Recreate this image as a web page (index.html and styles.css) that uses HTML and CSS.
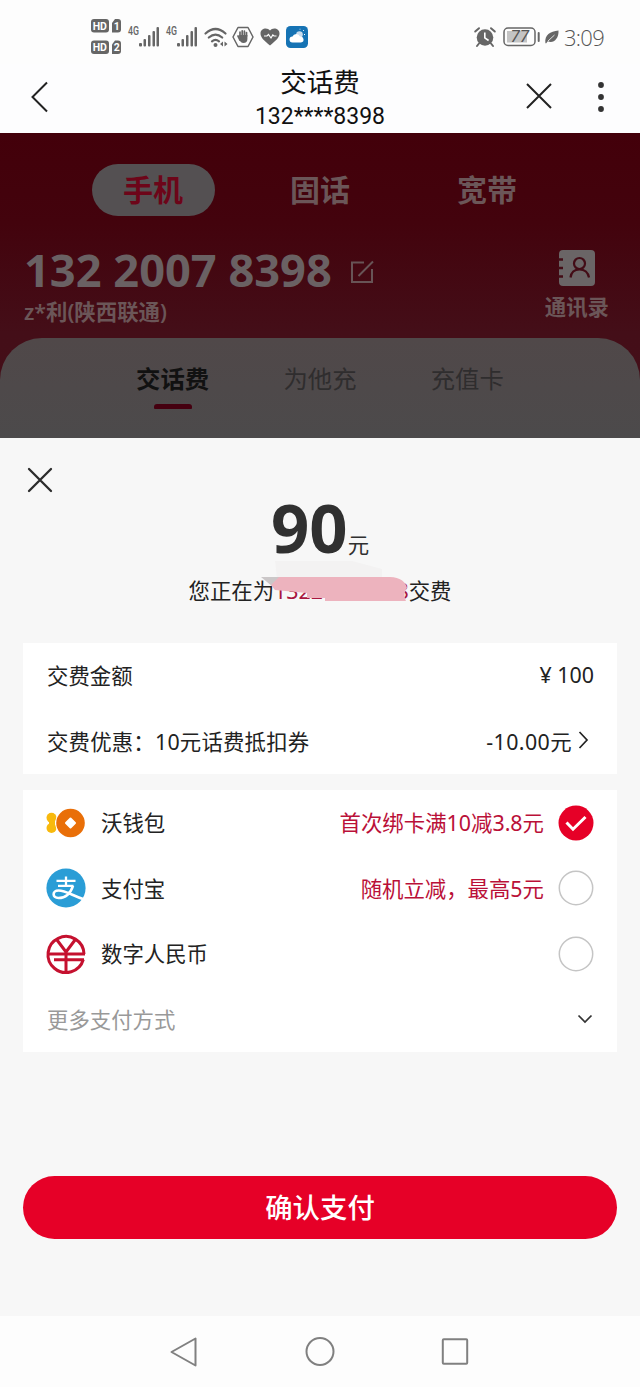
FILE: index.html
```html
<!DOCTYPE html>
<html lang="zh-CN">
<head>
<meta charset="utf-8">
<title>交话费</title>
<link rel="stylesheet" href="styles.css">
</head>
<body>
<div class="phone">
  <header class="status">
    <div class="status-left">
      <svg class="hd" width="31" height="36" viewBox="0 0 31 36">
        <g fill="#666"><rect x="0" y="0" width="18" height="13.500" rx="3"/><path d="M24 0h3a3 3 0 0 1 3 3v7.500a3 3 0 0 1-3 3h-6V4z"/><rect x="0" y="21.500" width="18" height="13.500" rx="3"/><path d="M24 21.500h3a3 3 0 0 1 3 3V32a3 3 0 0 1-3 3h-6v-9.500z"/></g>
        <g fill="#fff" class="badge-text"><text x="1.700" y="10.800">HD</text><text x="22.800" y="10.800">1</text><text x="1.700" y="32.300">HD</text><text x="22.800" y="32.300">2</text></g>
      </svg>
      <svg class="signal" width="32" height="22" viewBox="0 0 32 22"><text x="0" y="9" class="net-text" textLength="11" lengthAdjust="spacingAndGlyphs">4G</text><g fill="#666"><rect x="11" y="17" width="3" height="3.500" rx="1"/><rect x="15.500" y="13" width="2.500" height="7.500" rx="1"/><rect x="20" y="9" width="2.500" height="11.500" rx="1"/><rect x="24.500" y="5" width="2.500" height="15.500" rx="1"/><rect x="28.500" y="1" width="2.500" height="19.500" rx="1"/></g></svg>
      <svg class="signal second" width="32" height="22" viewBox="0 0 32 22"><text x="0" y="9" class="net-text" textLength="11" lengthAdjust="spacingAndGlyphs">4G</text><g fill="#666"><rect x="11" y="17" width="3" height="3.500" rx="1"/><rect x="15.500" y="13" width="2.500" height="7.500" rx="1"/><rect x="20" y="9" width="2.500" height="11.500" rx="1"/><rect x="24.500" y="5" width="2.500" height="15.500" rx="1"/><rect x="28.500" y="1" width="2.500" height="19.500" rx="1"/></g></svg>
      <svg class="wifi" width="24" height="21" viewBox="0 0 24 21"><g fill="none" stroke="#666" stroke-width="2.200" stroke-linecap="round"><path d="M1.500 6.500Q11.500-2.500 21.500 6.500M4.800 10.500Q11.500 4.800 18.200 10.500M8 14.300Q11.500 11.500 15 14.300"/></g><circle cx="11.500" cy="18" r="2" fill="#666"/><path d="M19 14.500v5l-3-2.500zM20.500 14.500v5l3-2.500z" fill="#666"/></svg>
      <svg class="hand" width="22" height="22" viewBox="0 0 22 22"><path d="M6 1.500h10l5 9.500-5 9.500H6L1 11z" fill="none" stroke="#666" stroke-width="1.500" stroke-linejoin="round"/><path d="M8 10V6M10.200 10V4.800M12.400 10V5M14.500 10V6.500M6 10l2 4" stroke="#666" stroke-width="1.700" stroke-linecap="round"/><path d="M7.200 9h8.200v4q0 4-4 4-3 0-4.200-4z" fill="#666"/></svg>
      <svg class="heart" width="20" height="18" viewBox="0 0 20 18"><path d="M10 17.500C4 12.500.5 9.500.5 5.500.5 0 7.500-1 10 2.500 12.500-1 19.500 0 19.500 5.500c0 4-3.500 7-9.500 12z" fill="#666"/><path d="M4 8h3L8.500 6.500l2.500 3.500 1.800-3L14 8h2.500" fill="none" stroke="#fff" stroke-width="1.200"/></svg>
      <svg class="weather" width="22" height="22" viewBox="0 0 22 22"><rect width="22" height="22" rx="4.500" fill="#1673b4"/><circle cx="13.500" cy="8.500" r="3.300" fill="#c9dced"/><path d="M14 3.500V2.800M18 8.500h1M17 5l.8-.8" stroke="#fff"/><path d="M6.500 16.500a3 3 0 0 1 0-6 4 4 0 0 1 7.500 0 3 3 0 1 1 1 6z" fill="#fff"/></svg>
    </div>
    <div class="status-right">
      <svg width="22" height="20" viewBox="0 0 22 20"><circle cx="11" cy="10.500" r="8.300" fill="#666"/><path d="M1.200 4.500 5 1.200M20.800 4.500 17 1.200M5 16.500l-2 2.500M17 16.500l2 2.500" stroke="#666" stroke-width="2" stroke-linecap="round"/><path d="M10.800 5.500v5.300l3.800 2.700" fill="none" stroke="#fff" stroke-width="1.600"/></svg>
      <svg class="battery" width="38" height="20" viewBox="0 0 38 20"><rect x="1" y="1" width="31" height="17.500" rx="4" fill="none" stroke="#666" stroke-width="1.500"/><rect x="4" y="4" width="20" height="11.500" fill="#c4c4c4"/><text x="7.500" y="15" class="battery-text">77</text><rect x="34.700" y="5" width="2" height="10" rx="1" fill="#666"/></svg>
      <svg class="leaf" width="14" height="14" viewBox="0 0 14 14"><path d="M13.500.5C14 9 8 14 2.800 11.300L1 13.500l-.6-.6C-.5 5 5 1.500 13.500.5z" fill="#666"/><path d="M3 11 9.500 5" stroke="#fff" stroke-width=".8"/></svg>
      <span class="clock">3:09</span>
    </div>
  </header>

  <div class="titlebar">
    <svg class="back" width="20" height="34" viewBox="0 0 20 34"><path d="M17 2.500 2.500 17 17 31.500" fill="none" stroke="#222" stroke-width="2"/></svg>
    <div class="title"><h1>交话费</h1><p>132****8398</p></div>
    <div class="title-actions">
      <svg width="28" height="28" viewBox="0 0 28 28"><path d="m2 2 24 24M26 2 2 26" stroke="#222" stroke-width="2"/></svg>
      <svg width="8" height="32" viewBox="0 0 8 32" fill="#333"><circle cx="4" cy="4" r="2.900"/><circle cx="4" cy="16" r="2.900"/><circle cx="4" cy="28" r="2.900"/></svg>
    </div>
  </div>

  <section class="hero">
    <nav class="services"><span class="active">手机</span><span>固话</span><span>宽带</span></nav>
    <div class="account">
      <div class="owner">
        <div class="number">132 2007 8398
          <svg class="edit" width="24" height="24" viewBox="0 0 24 24"><path d="M14 2.500H2v19.500h20V9M8.500 16 23 1.500" fill="none" stroke="#685456" stroke-width="2"/></svg>
        </div>
        <div class="region">z*利(陕西联通)</div>
      </div>
      <div class="contacts">
        <svg width="38" height="38" viewBox="0 0 38 38"><rect x="1" y="1" width="36" height="36" rx="4" fill="#6a6566"/><path d="M0 10.500h5M0 19h5M0 27.500h5" stroke="#430c16" stroke-width="2.500"/><g fill="none" stroke="#430c16" stroke-width="2.200"><circle cx="21.500" cy="14.500" r="5.500"/><path d="M12.500 28.500q1-8 9-8t9.500 8"/></g></svg>
        <span>通讯录</span>
      </div>
    </div>
    <nav class="recharge"><span class="current">交话费</span><span>为他充</span><span>充值卡</span></nav>
  </section>

  <main class="sheet">
    <svg class="close" width="26" height="26" viewBox="0 0 26 26"><path d="m2 2 22 22M24 2 2 24" stroke="#2b2b2b" stroke-width="2.300" stroke-linecap="round"/></svg>
    <div class="amount"><b>90</b><span>元</span></div>
    <p class="paying">您正在为<span class="masked">13220078398<svg class="smear" width="152" height="42" viewBox="0 0 152 42"><path d="M14 0h77l30 8v9H16z" fill="#f3f2f2"/><path d="M0 16h24v10L12 26z" fill="#cbc7c8"/><path d="M18 16h111c10 0 16 5 17 11-3 3-3 9-1 13H64V37H46V32L14 29l-4-5z" fill="#edb3be"/></svg></span>交费</p>

    <div class="card bill">
      <div class="row"><span>交费金额</span><span>¥ 100</span></div>
      <div class="row"><span class="coupon">交费优惠：10元话费抵扣券</span><span class="discount">-10.00元<svg width="14" height="20" viewBox="0 0 14 20"><path d="m2.500 2 7.500 8-7.500 8" fill="none" stroke="#222" stroke-width="1.700"/></svg></span></div>
    </div>

    <div class="card methods">
      <div class="row">
        <svg class="logo" width="40" height="40" viewBox="0 0 40 40"><g fill="#f8b90d"><circle cx="5.500" cy="14.700" r="5"/><circle cx="5.500" cy="25" r="5"/><rect x="3" y="14" width="6" height="11"/></g><circle cx="24.500" cy="20" r="15.200" fill="#fff"/><circle cx="24.500" cy="20" r="14.300" fill="#e96f08"/><path d="m24.500 15.500 4.500 4.500-4.500 4.500L20 20z" fill="#fff" stroke="#fff" stroke-width="2" stroke-linejoin="round"/></svg>
        <span class="name">沃钱包</span><span class="promo">首次绑卡满10减3.8元</span>
        <svg class="radio" width="36" height="36" viewBox="0 0 36 36"><circle cx="18" cy="18" r="17.500" fill="#e60027"/><path d="m8.500 17.500 6.500 6.700L27.500 12" fill="none" stroke="#fff" stroke-width="3"/></svg>
      </div>
      <div class="row">
        <svg class="logo" width="40" height="40" viewBox="0 0 40 40"><circle cx="20" cy="20" r="19.600" fill="#2a9dd6"/><g fill="none" stroke="#fff" stroke-width="2.300"><path d="M10.500 12.800h19M20 8.500v9.300M12 17.800h15.500"/><path d="M27 17.800C24 27 18 30 12.500 30 6 30 6 22.500 12.500 22.500c7 0 14 5 24.500 8.500" stroke-width="2.600"/></g></svg>
        <span class="name">支付宝</span><span class="promo">随机立减，最高5元</span>
        <svg class="radio" width="36" height="36" viewBox="0 0 36 36"><circle cx="18" cy="18" r="16.700" fill="#fff" stroke="#c5c5c5" stroke-width="1.500"/></svg>
      </div>
      <div class="row">
        <svg class="logo" width="40" height="40" viewBox="0 0 40 40"><g fill="none" stroke="#c5112f" stroke-width="3"><path d="M38 20A18 18 0 1 0 37.300 25.500"/><path d="M11 6 20 18 29 6M3 20h36M8 25.700h30M20 18v19"/></g></svg>
        <span class="name">数字人民币</span>
        <svg class="radio" width="36" height="36" viewBox="0 0 36 36"><circle cx="18" cy="18" r="16.700" fill="#fff" stroke="#c5c5c5" stroke-width="1.500"/></svg>
      </div>
      <div class="row more"><span>更多支付方式</span><svg width="18" height="12" viewBox="0 0 18 12"><path d="m2.500 2.500 6.500 6.500 6.500-6.500" fill="none" stroke="#333" stroke-width="1.700"/></svg></div>
    </div>

    <button class="confirm">确认支付</button>
  </main>

  <footer class="navbar">
    <svg width="30" height="32" viewBox="0 0 30 32"><path d="M25.500 2.500v27L1.500 16z"/></svg>
    <svg width="30" height="32" viewBox="0 0 30 32"><circle cx="15" cy="15.500" r="13.500"/></svg>
    <svg width="30" height="32" viewBox="0 0 30 32"><rect x="2.800" y="3.300" width="24.400" height="24.400" rx="1"/></svg>
  </footer>
</div>
</body>
</html>
```

FILE: styles.css
```css
* { box-sizing: border-box; }
body { margin: 0; background: #fdfdfd; }
h1, p { margin: 0; font-weight: 400; }
svg { display: block; flex: none; overflow: visible; }

.phone {
  width: 640px;
  height: 1387px;
  display: flex;
  flex-direction: column;
  font-family: "Noto Sans", "Noto Sans CJK SC", sans-serif;
  font-size: 21.400px;
  color: #222;
  overflow: hidden;
}

/* System status bar */
.status {
  height: 64px;
  padding: 19px 36px 0 91px;
  display: flex;
  justify-content: space-between;
  align-items: flex-start;
}
.status-left, .status-right { display: flex; height: 36px; align-items: center; }
.badge-text { font: bold 10.500px Roboto, sans-serif; }
.net-text { font: 500 12px Roboto, sans-serif; fill: #666; }
.battery-text { font: italic 17px Roboto, sans-serif; fill: #555; }
.signal { margin-left: 6px; }
.second { margin-left: 6px; }
.wifi { margin-left: 6px; }
.hand { margin-left: 4px; }
.heart { margin-left: 6px; }
.weather { margin-left: 6px; }
.battery { margin-left: 7px; }
.leaf { margin-left: 4px; }
.clock { margin-left: 5px; font: 300 22px/30px "Open Sans", "Noto Sans", sans-serif; letter-spacing: -0.700px; color: #555; }

/* App title */
.titlebar {
  height: 68.500px;
  padding: 0 35px 0 30px;
  display: grid;
  grid-template-columns: 100px 1fr 80px;
  background: #fdfdfe;
}
.back { margin-top: 16px; }
.title { margin-left: -15px; text-align: center; color: #111; }
.title h1 { font-size: 26.500px; line-height: 36px; }
.title p { font: 23px/33px Roboto, sans-serif; }
.title-actions { display: flex; justify-content: space-between; align-items: flex-start; padding-top: 18px; }
.title-actions svg + svg { margin-top: -1px; }

/* Dimmed account page */
.hero {
  height: 305.500px;
  background: linear-gradient(#43000a 0, #43030d 90px, #440e18 200px, #440f19);
  color: #6b5658;
  display: flex;
  flex-direction: column;
}
.services { display: flex; padding: 31px 69.500px 0; height: 83px; }
.services span {
  width: 123px;
  height: 52px;
  margin: 0 22px;
  text-align: center;
  font-size: 30px;
  font-weight: 700;
  line-height: 51px;
}
.services .active { background: #545052; border-radius: 26px; color: #6d0519; }
.account { height: 122px; display: flex; justify-content: space-between; padding: 28px 31px 0 24px; }
.number {
  display: flex;
  align-items: center;
  gap: 18px;
  height: 52px;
  font-size: 45.200px;
  font-weight: 700;
  line-height: 52px;
  color: #6a6163;
  white-space: nowrap;
}
.edit { margin-top: 4px; }
.region { font-size: 21.400px; line-height: 31px; font-weight: 600; }
.contacts { display: flex; flex-direction: column; align-items: center; padding-top: 5px; font-size: 21.400px; line-height: 40px; font-weight: 600; }
.recharge {
  height: 100.500px;
  padding: 20px 99px 0;
  display: flex;
  background: linear-gradient(#504849, #4c4a4b);
  border-radius: 42px 42px 0 0;
  color: #2f2d2e;
}
.recharge span { width: 147.400px; text-align: center; font-size: 24.400px; line-height: 42px; }
.recharge .current { font-weight: 700; color: #111; }
.current::after { content: ""; display: block; width: 38px; height: 5px; margin: 4px auto 0; border-radius: 3px 3px 1px 1px; background: #450010; }

/* Payment sheet */
.sheet {
  height: 878px;
  padding: 29px 23px 0;
  display: flex;
  flex-direction: column;
  background: #f7f7f7;
}
.close { margin-left: 4px; }
.amount {
  height: 72px;
  display: flex;
  justify-content: center;
  align-items: baseline;
  color: #303030;
  line-height: 68px;
}
.amount b { font-size: 67px; line-height: 68px; }
.amount span { font-size: 21.400px; }
.paying { height: 34px; margin-top: 9px; text-align: center; line-height: 34px; white-space: nowrap; }
.masked { position: relative; color: #a9163f; }
.smear { position: absolute; left: -13px; top: -15px; }
.card { background: #fff; padding: 0 23px 0 24px; }
.bill { margin-top: 35px; height: 131px; }
.row { height: 65.500px; display: flex; align-items: center; justify-content: space-between; }
.row > span { padding-bottom: 2px; }
.coupon { letter-spacing: 0.200px; }
.discount { display: flex; align-items: center; gap: 5px; margin-right: 3px; letter-spacing: 0.400px; }
.methods { margin-top: 16px; height: 262px; padding-left: 23px; }
.logo { margin-right: 15px; }
.name { margin-right: auto; }
.promo { color: #ba1038; margin-right: 14px; }
.more { color: #999; padding-left: 1px; }
.confirm {
  margin-top: 124px;
  height: 63px;
  flex: none;
  border: 0;
  border-radius: 32px;
  padding: 0 0 3px;
  background: #e60027;
  color: #fff;
  font: 500 27.400px/60px "Noto Sans CJK SC", sans-serif;
}

/* System navigation */
.navbar {
  flex: 1;
  display: flex;
  justify-content: center;
  align-items: center;
  gap: 105px;
  background: #fdfdfd;
}
.navbar svg { fill: none; stroke: #808080; stroke-width: 2; stroke-linejoin: round; }
```
